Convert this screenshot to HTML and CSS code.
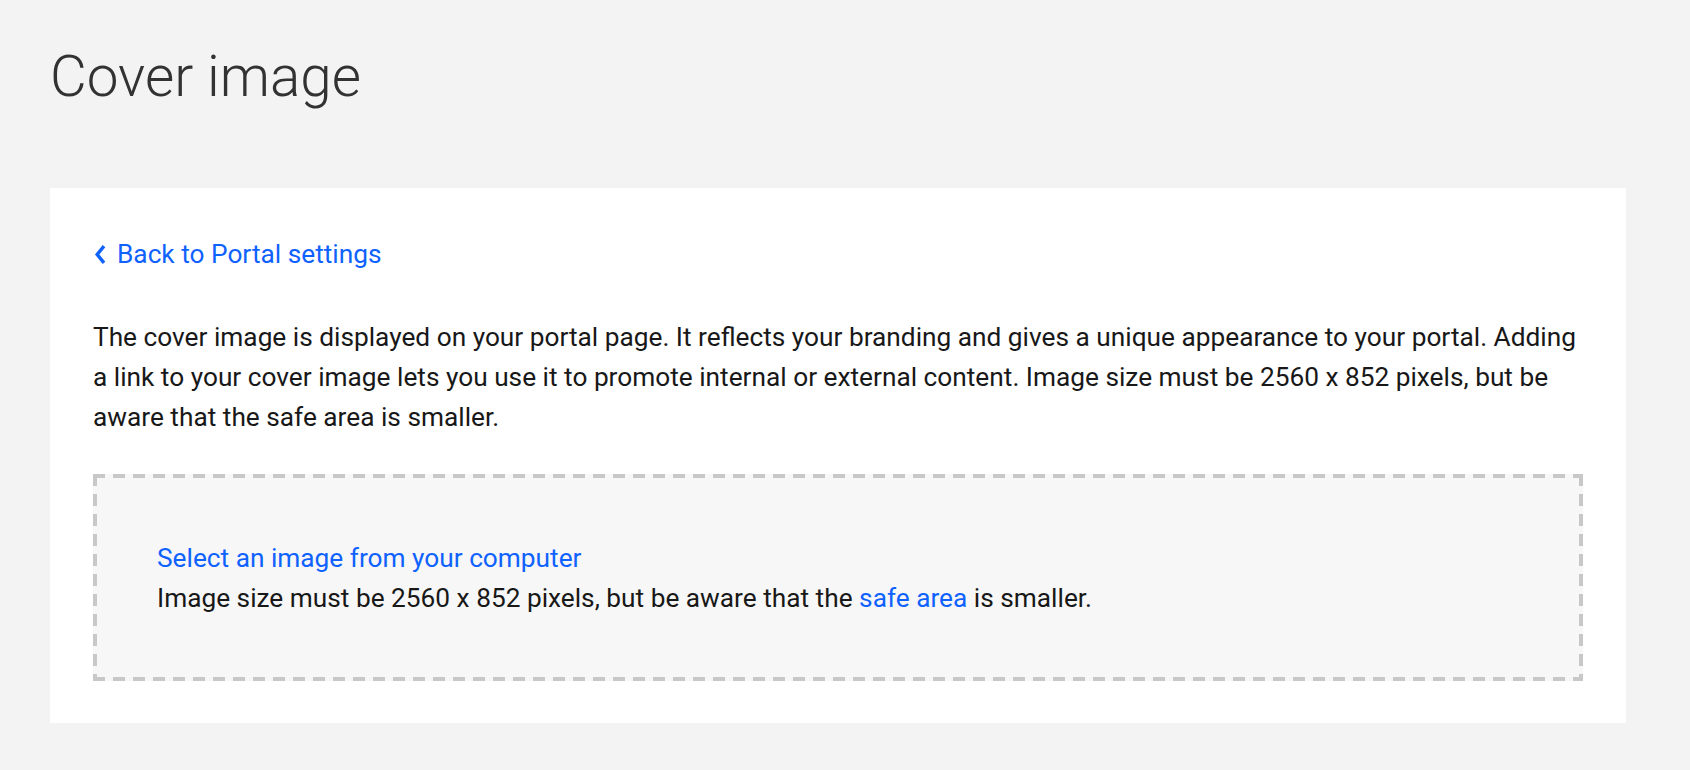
FILE: index.html
```html
<!DOCTYPE html>
<html lang="en">
<head>
<meta charset="utf-8">
<title>Cover image</title>
<link rel="stylesheet" href="styles.css">
</head>
<body>
<main class="page">
  <h1 class="page-title">Cover image</h1>
  <section class="card">
    <a class="back-link" href="#">
      <svg class="back-icon" width="12" height="19" viewBox="0 0 12 19" aria-hidden="true">
        <path d="M10 1.2 L3.2 9.5 L10 17.8" fill="none" stroke="currentColor" stroke-width="3.4" stroke-linejoin="miter"/>
      </svg>
      <span>Back to Portal settings</span>
    </a>
    <p class="description">The cover image is displayed on your portal page. It reflects your branding and gives a unique appearance to your portal. Adding a link to your cover image lets you use it to promote internal or external content. Image size must be 2560 x 852 pixels, but be aware that the safe area is smaller.</p>
    <div class="dropzone">
      <a class="dz-link" href="#">Select an image from your computer</a>
      <p class="dz-hint">Image size must be 2560 x 852 pixels, but be aware that the <a class="inline-link" href="#">safe area</a> is smaller.</p>
    </div>
  </section>
</main>
</body>
</html>
```

FILE: styles.css
```css
* { box-sizing: border-box; }

html, body {
  margin: 0;
  padding: 0;
  background: #f3f3f3;
  font-family: Roboto, "Liberation Sans", Arial, sans-serif;
  color: #181818;
}

.page {
  padding: 45px 64px 40px 50px;
}

.page-title {
  margin: 0 0 79px 0;
  font-size: 56.6px;
  line-height: 64px;
  font-weight: 300;
  color: #323232;
}

.card {
  background: #ffffff;
  padding: 46px 43px 42px 43px;
}

.back-link {
  display: inline-flex;
  align-items: center;
  gap: 11px;
  color: #0f62fe;
  text-decoration: none;
  font-size: 26.25px;
  line-height: 40px;
}

.back-icon {
  display: block;
  margin-left: 1px;
}

.description {
  margin: 43px 0 37px 0;
  font-size: 26.25px;
  line-height: 40px;
  color: #181818;
}

.dropzone {
  --dash: #c8c8c8;
  padding: 64px 64px 63px 64px;
  display: flex;
  flex-direction: column;
  align-items: flex-start;
  background:
    repeating-linear-gradient(90deg, var(--dash) 0 12px, transparent 12px 20px) left top / 100% 4px no-repeat,
    repeating-linear-gradient(90deg, var(--dash) 0 12px, transparent 12px 20px) left bottom / 100% 4px no-repeat,
    repeating-linear-gradient(180deg, var(--dash) 0 12px, transparent 12px 20px) left top / 4px 100% no-repeat,
    repeating-linear-gradient(180deg, var(--dash) 0 12px, transparent 12px 20px) right top / 4px 100% no-repeat,
    #f7f7f7;
}

.dz-link {
  color: #0f62fe;
  text-decoration: none;
  font-size: 26.25px;
  line-height: 40px;
}

.dz-hint {
  margin: 0;
  font-size: 26.25px;
  line-height: 40px;
  color: #181818;
}

.inline-link {
  color: #0f62fe;
  text-decoration: none;
}
```
